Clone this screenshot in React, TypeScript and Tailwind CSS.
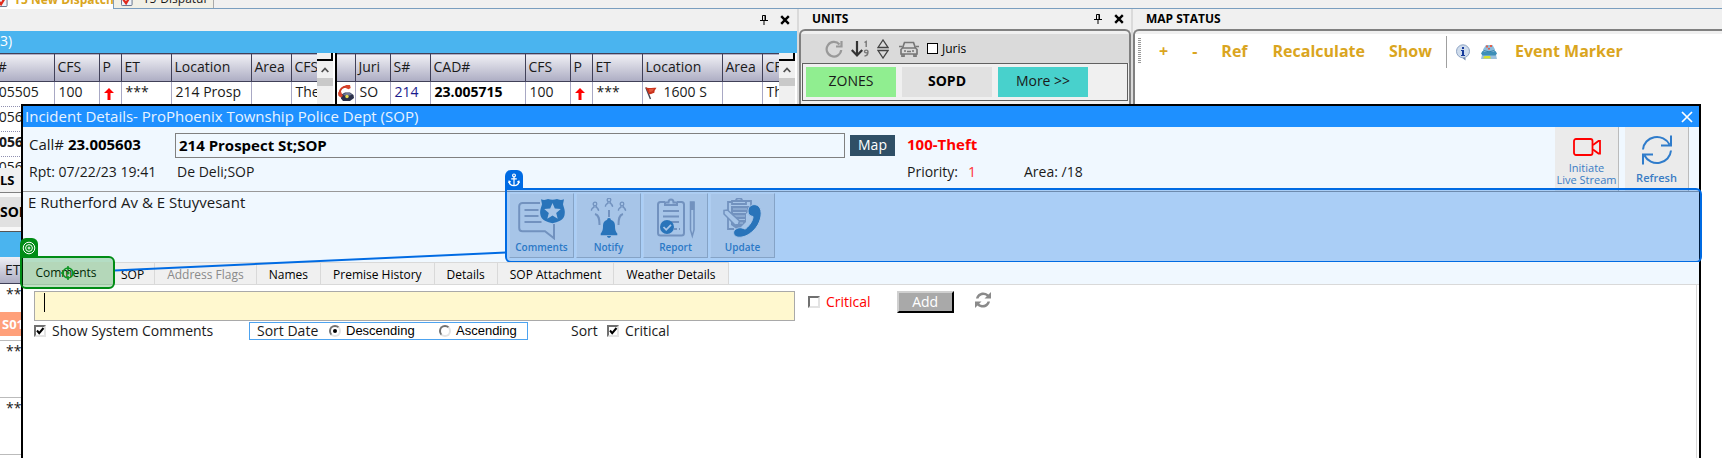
import React from "react";

const AnchorIcon = () => (
  <svg viewBox="0 0 12 14" className="h-3.5 w-3" fill="none" stroke="#fff" strokeWidth="1.2">
    <circle cx="6" cy="2.4" r="1.4" />
    <path d="M6 3.8V12.6M3.2 5.8h5.6M1 8.4c.3 2.600 2.200 4.200 5 4.200s4.700-1.600 5-4.200M.5 9.900l.6-1.700 1.600.9M11.500 9.900l-.6-1.700-1.600.9" />
  </svg>
);

const PinIcon = () => (
  <svg viewBox="0 0 8 10" className="h-2.5 w-2" fill="none" stroke="#000">
    <path d="M2.500 5.500v-5h3v5M0 5.500h8M4 6v4M5 .5v5" />
  </svg>
);

const XIcon = () => (
  <svg viewBox="0 0 10 10" className="h-2.5 w-2.5" stroke="#000" strokeWidth="2.4">
    <path d="M1.200 1.200l7.600 7.600M8.800 1.200L1.200 8.800" />
  </svg>
);

const TabCheckIcon = () => (
  <svg viewBox="0 0 13 14" className="h-3.5 w-3 shrink-0">
    <rect x=".5" y=".5" width="11.500" height="12.500" rx="1" fill="#eef3fa" stroke="#5d6b85" />
    <path d="M2.500 6.500l3 4L11 1.500" fill="none" stroke="#e02a1c" strokeWidth="2.400" />
  </svg>
);

const UpArrow = () => (
  <svg viewBox="0 0 10 12" className="mt-1 h-3 w-2.5" fill="#f00">
    <path d="M5 0l5 5H6.500v7h-3V5H0z" />
  </svg>
);

const PhoneIcon = () => (
  <svg viewBox="0 0 16 16" className="h-4 w-4">
    <path d="M3.500 9.500L7 7.500h5l3.500 2.500.5 3-4 3H5l-2-2.500z" fill="#2a2f4a" />
    <path d="M5 9l3-1h4l2 1.500-2 1H6z" fill="#6f7896" />
    <path d="M1.600 8C1.800 4.500 4.500 1.500 9 1.600" fill="none" stroke="#cf3a24" strokeWidth="2.200" />
    <path d="M7.500 0h4.500l.7 3-2.200 1.300L7.800 3z" fill="#d8452c" />
    <path d="M0 7.500l3-.7 2 4.200-2.500 1.500L.3 10.500z" fill="#d8452c" />
    <circle cx="9" cy="11.500" r="1.700" fill="#e8dc50" />
  </svg>
);

const FlagIcon = () => (
  <svg viewBox="0 0 12 13" className="mt-0.5 h-3.5 w-3">
    <path d="M.8 1l4.700 11.500" stroke="#445" strokeWidth="1.400" />
    <path d="M.5.8c3 1.500 6 0 11 .5L9.700 4l-.5 2.500C7.500 6 6 8.500 3.800 7.500z" fill="#c9331c" />
    <path d="M4 2.500l5-.3-1.500 2.500-3 1z" fill="#e2553a" />
  </svg>
);

type Col = { label: React.ReactNode; w: string };
const leftCols: Col[] = [
  { label: "CAD#", w: "w-[87px]" },
  { label: "CFS", w: "w-[45px]" },
  { label: "P", w: "w-[22px]" },
  { label: "ET", w: "w-[50px]" },
  { label: "Location", w: "w-[80px]" },
  { label: "Area", w: "w-[40px]" },
  { label: "CFS", w: "w-[27px]" },
];
const rightCols: Col[] = [
  { label: "", w: "w-[18px]" },
  { label: "Juri", w: "w-[35px]" },
  { label: "S#", w: "w-[40px]" },
  { label: "CAD#", w: "w-[95px]" },
  { label: "CFS", w: "w-[45px]" },
  { label: "P", w: "w-[22px]" },
  { label: "ET", w: "w-[50px]" },
  { label: "Location", w: "w-[80px]" },
  { label: "Area", w: "w-[40px]" },
  { label: "CFS", w: "w-[17px]" },
];

function Grid({ cols, rows, className }: { cols: Col[]; rows: React.ReactNode[][]; className?: string }) {
  return (
    <table className={`table-fixed border-collapse text-sm text-[#1a1a1a] ${className ?? ""}`}>
      <thead>
        <tr className="h-7 border-y border-[#404058] bg-linear-to-b from-[#efeff4] to-[#aeaec4]">
          {cols.map((c, i) => (
            <th key={i} className={`${c.w} overflow-hidden border-r border-[#404058] p-0 pb-0.5 pl-[3px] text-left font-normal whitespace-nowrap`}>
              {c.label}
            </th>
          ))}
        </tr>
      </thead>
      <tbody>
        {rows.map((r, i) => (
          <tr key={i} className="h-[25px] border-b border-dotted border-[#9090b0] bg-white">
            {r.map((c, j) => (
              <td key={j} className="overflow-hidden border-r border-solid border-r-[#a8a8c4] p-0 pb-1 pl-1 whitespace-nowrap">
                {c}
              </td>
            ))}
          </tr>
        ))}
      </tbody>
    </table>
  );
}

function ScrollBar() {
  return (
    <div className="flex w-4 shrink-0 flex-col bg-[#f0f0f0]">
      <div className="h-2 border-r-2 border-b-2 border-black bg-[#f0f0f0]" />
      <div className="flex h-[17px] items-center justify-center">
        <svg viewBox="0 0 8 6" className="h-1.5 w-2" fill="none" stroke="#505050" strokeWidth="1.800">
          <path d="M.7 5L4 1.500 7.300 5" />
        </svg>
      </div>
      <div className="h-2 bg-[#c9c9c9]" />
    </div>
  );
}

function Dispatch() {
  const stars = <span>***</span>;
  return (
    <section className="flex w-[797px] shrink-0 flex-col bg-white">
      <div className="flex h-[22px] items-center justify-end gap-3 bg-[#f0f0f0] pr-[7px]">
        <button aria-label="Pin calls"><PinIcon /></button>
        <button aria-label="Close calls"><XIcon /></button>
      </div>
      <h2 className="h-[22px] bg-[#4ab4ef] text-sm leading-5 text-white">3)</h2>
      <div className="flex h-[115px] overflow-hidden">
        <div className="flex w-[317px] items-start overflow-hidden">
          <Grid
            className="-ml-[33px] w-[351px] shrink-0"
            cols={leftCols}
            rows={[
              ["23.005505", "100", <UpArrow />, stars, "214 Prosp", "", "Theft"],
              ["23.005601", "", "", "", "", "", ""],
              [<b>23.005603</b>, "", "", "", "", "", ""],
              ["23.005604", "", "", "", "", "", ""],
            ]}
          />
        </div>
        <ScrollBar />
        <div className="ml-0.5 w-0.5 bg-black" />
        <div className="flex w-[442px] items-start overflow-hidden">
          <Grid
            className="w-[442px] shrink-0"
            cols={rightCols}
            rows={[
              [
                <span className="-ml-[3px] block pt-0.5"><PhoneIcon /></span>,
                "SO",
                <span className="text-[#1a1a8c]">214</span>,
                <b className="text-black">23.005715</b>,
                "100",
                <UpArrow />,
                stars,
                <span className="-ml-0.5 flex items-center gap-[7px]"><FlagIcon />1600 S</span>,
                "",
                "Theft",
              ],
            ]}
          />
        </div>
        <ScrollBar />
      </div>
      <h2 className="h-[25px] border-b border-[#808080] bg-[#f0f0f0] text-[13px] leading-6 font-bold text-black">
        LS
      </h2>
      <div className="flex h-[38px] items-center bg-[#f8f8f8]">
        <button className="h-[30px] w-[90px] bg-[#e1e1e1] text-left text-sm font-bold text-black">SOPD</button>
      </div>
      <div className="h-[26px] border-t border-[#555] bg-[#4ab4ef]" />
      <div className="h-[27px] border-b border-[#404058] bg-linear-to-b from-[#efeff4] to-[#aeaec4] pl-[5px] text-sm leading-[26px]">ET</div>
      <div className="h-[57px] border-b border-[#bbb] pl-1.5 text-sm leading-5">
        ***
        <div className="mt-2 -ml-1.5 h-6 bg-[#ffa07a] pl-0.5 text-[13px] leading-6 font-bold text-white">S01</div>
      </div>
      <div className="h-[57px] border-b border-[#bbb] pl-1.5 text-sm leading-5">***</div>
      <div className="h-[57px] border-b border-[#bbb] pl-1.5 text-sm leading-5">***</div>
    </section>
  );
}

function Units() {
  return (
    <section className="flex w-[334px] shrink-0 flex-col border-l-2 border-[#dadada] bg-[#f0f0f0]">
      <div className="flex h-5 items-center gap-3 pr-[7px] pl-[13px]">
        <h2 className="flex-1 text-xs font-bold text-black">UNITS</h2>
        <button aria-label="Pin units"><PinIcon /></button>
        <button aria-label="Close units"><XIcon /></button>
      </div>
      <div className="flex flex-1 flex-col rounded-t-md border-2 border-b-0 border-[#808080] pt-[3px]">
        <div className="flex h-[29px] items-center gap-2 bg-[#dadada] pl-6">
          <button aria-label="Refresh units">
            <svg viewBox="0 0 18 18" className="h-[18px] w-[18px]" fill="none" stroke="#999" strokeWidth="2.200">
              <path d="M14.500 4.500A7.300 7.300 0 1 0 16.200 10M16.500 1v5.500H11" />
            </svg>
          </button>
          <button aria-label="Sort units">
            <svg viewBox="0 0 18 18" className="h-[18px] w-[18px]" fill="none" stroke="#333" strokeWidth="2.200">
              <path d="M6 1v14M.8 10L6 15.500 11.200 10" />
              <path d="M13.500 2.500l1.700-1v5.500M17 11.500c0 1.800-3.500 1.800-3.500 0s3.500-1.800 3.500 0c0 3-.5 4.500-3.500 4.500" stroke="#777" strokeWidth="1.400" />
            </svg>
          </button>
          <button aria-label="Expand units">
            <svg viewBox="0 0 12 20" className="h-5 w-3" fill="none" stroke="#444" strokeWidth="1.300">
              <path d="M1 8.500L6 1l5 7.500zM1 11.500L6 19l5-7.500z" />
            </svg>
          </button>
          <button aria-label="Vehicles" className="ml-0.5">
            <svg viewBox="0 0 20 16" className="h-4 w-5" fill="none" stroke="#777" strokeWidth="1.700">
              <path d="M3.500 7L5.500 1.500h9L16.500 7M2 13V8.500L3.500 7h13L18 8.500V13zM0 5.500h3M17 5.500h3M3 13v2.500h2V13M15 13v2.500h2V13M5 10h2M13 10h2M8 10.500h4" />
            </svg>
          </button>
          <label className="flex items-center gap-1 text-xs text-black">
            <input type="checkbox" className="h-[11px] w-[11px] appearance-none border border-black bg-white checked:bg-black" />
            Juris
          </label>
        </div>
        <div className="mx-px flex h-[38px] items-center gap-1.5 border border-[#606060] px-[3px] text-sm">
          <button className="h-[30px] w-[90px] bg-[#90ee90] pb-0.5">ZONES</button>
          <button className="h-[30px] w-[90px] bg-[#e1e1e1] pb-0.5 font-bold text-black">SOPD</button>
          <button className="h-[30px] w-[90px] bg-[#48d1cc] pb-0.5">More &gt;&gt;</button>
        </div>
      </div>
    </section>
  );
}

function MapStatus() {
  return (
    <section className="flex min-w-0 flex-1 flex-col border-l-2 border-[#dadada] bg-[#f0f0f0]">
      <h2 className="h-5 pl-[13px] text-xs leading-[19px] font-bold text-black">MAP STATUS</h2>
      <div className="flex-1 rounded-tl-md border-t-2 border-l-2 border-[#808080] pt-[3px]">
        <div className="flex h-full items-start bg-white pt-px pl-[3px] text-base font-bold text-[#daa520]">
          <div className="mt-[3px] h-[25px] w-[3px] bg-[repeating-linear-gradient(to_bottom,#999_0_1px,#fff_1px_2px)]" />
          <div className="flex h-[34px] items-center whitespace-nowrap">
            <button className="ml-[18px] pb-0.5">+</button>
            <button className="ml-6 pb-0.5">-</button>
            <button className="ml-6 pb-0.5">Ref</button>
            <button className="ml-[25px] pb-0.5">Recalculate</button>
            <button className="ml-6 pb-0.5">Show</button>
            <div className="ml-3.5 h-8 w-px bg-[#a0a0a0]" />
            <button aria-label="Map information" className="ml-2">
              <svg viewBox="0 0 16 17" className="h-[17px] w-4">
                <circle cx="8" cy="7.300" r="6.500" fill="#cfdcec" stroke="#8ea4c4" />
                <path d="M7.500 14h3v2.500z" fill="#6d86ac" />
                <path d="M7 3h2v2H7zM6 6h3v5h1v1H6v-1h1V7H6z" fill="#163a9c" />
              </svg>
            </button>
            <button aria-label="Map layers" className="ml-2.5">
              <svg viewBox="0 0 16 16" className="h-4 w-4">
                <path d="M1 10.500h14l1 4.500H0z" fill="#9cc0dc" />
                <path d="M3.500 12h5.500l1 2.500H2z" fill="#d8e02c" />
                <path d="M1.500 7h13l1.500 2.500-1.500 2h-13L0 9.500z" fill="#3d8fb8" />
                <path d="M5 1h6.500L14 5.500 13 8H3L2 5.500z" fill="#8cbcdc" />
                <path d="M2.500 6.500l5.500 1.300 5.500-1.300" fill="none" stroke="#2f7fa8" />
                <path d="M5 1.500h2v2H5zM9 1h2v2H9zM7 4h2v1.500H7z" fill="#e0604c" />
              </svg>
            </button>
            <button className="ml-[18px] pb-0.5">Event Marker</button>
          </div>
        </div>
      </div>
    </section>
  );
}

function Check({ id, label, checked, className }: { id: string; label: string; checked?: boolean; className?: string }) {
  return (
    <label htmlFor={id} className={`flex items-center gap-1.5 ${className ?? ""}`}>
      <span className="relative h-3 w-3">
        <input
          id={id}
          type="checkbox"
          defaultChecked={checked}
          className="peer block h-3 w-3 appearance-none border-2 border-t-[#707070] border-r-[#e3e3e3] border-b-[#e3e3e3] border-l-[#707070] bg-white"
        />
        <svg viewBox="0 0 12 12" className="pointer-events-none absolute inset-0 hidden h-3 w-3 peer-checked:block" fill="none" stroke="#000" strokeWidth="2">
          <path d="M3 5.500l2.200 2.700L9.500 3" />
        </svg>
      </span>
      {label}
    </label>
  );
}

function Radio({ label, checked }: { label: string; checked?: boolean }) {
  return (
    <label className="flex items-center gap-[5px] font-['Liberation_Sans',sans-serif] text-[13px] text-black">
      <span className="relative h-3 w-3">
        <input
          type="radio"
          name="sortDate"
          defaultChecked={checked}
          className="peer block h-3 w-3 appearance-none rounded-full border-2 border-t-[#707070] border-r-[#e3e3e3] border-b-[#e3e3e3] border-l-[#707070]"
        />
        <span className="pointer-events-none absolute top-1 left-1 hidden h-1 w-1 rounded-full bg-black peer-checked:block" />
      </span>
      {label}
    </label>
  );
}

const person = (x: number, y: number) => (
  <g transform={`translate(${x} ${y})`} fill="none" stroke="#a0a4b2" strokeWidth="1.300">
    <circle cx="4" cy="2" r="1.800" />
    <path d="M.4 8.800c0-2 .9-3 2.500-3.400V4M5.100 4v1.400C6.700 5.800 7.600 6.800 7.600 8.800z" />
  </g>
);

const tools = [
  {
    label: "Comments",
    icon: (
      <>
        <path d="M22 5H4.500C2.500 5 1.200 6.300 1.200 8.300V30c0 2 1.300 3.300 3.300 3.300h22.500l9 7V26M6.500 12h14M6.500 18h14M6.500 24h17" fill="none" stroke="#a0a4b2" strokeWidth="2" />
        <path d="M25 1.200c3 1.400 5.500.4 7-.2 3 1 6 1 9 0 1.500.6 4 1.600 7 .2l-1 5c1 4 2.500 6 1.500 11-1 5-7 7-12 8-5-1-11-3-12-8-1-5 .5-7 1.500-11z" transform="translate(-2)" fill="#3a79aa" />
        <path d="M34.500 5l2.300 5.600 6 .4-4.600 3.900 1.500 5.800-5.200-3.200-5.200 3.200 1.500-5.800-4.600-3.900 6-.4z" fill="#ebebeb" />
      </>
    ),
  },
  {
    label: "Notify",
    icon: (
      <>
        {person(6, 4)}
        {person(20, 0)}
        {person(33, 4)}
        <path d="M10 16c4 1 4.500 5 4.500 11M38 16c-4 1-4.500 5-4.500 11M24 12v7" fill="none" stroke="#a0a4b2" strokeWidth="2" />
        <path d="M24 20c1.500 0 1.800 1 1.800 1.800 3 1 4.200 3 4.200 6 0 5 1 6 2.300 7.800v1.600H15.700v-1.600C17 33.800 18 32.800 18 27.800c0-3 1.200-5 4.200-6C22.200 21 22.500 20 24 20zM22 38h4c0 2.400-4 2.400-4 0z" fill="#3a79aa" />
      </>
    ),
  },
  {
    label: "Report",
    icon: (
      <>
        <path d="M13 4H8.500C7 4 6 5 6 6.500V35c0 1.500 1 2.500 2.500 2.500h21c1.500 0 2.500-1 2.500-2.500V6.500C32 5 31 4 29.500 4H25M13 7h12V4.500h-3.500c0-4-5-4-5 0H13zM11 13h16M11 18.500h16M19 24h8M22 31h3M27 31h1" fill="none" stroke="#a0a4b2" strokeWidth="2" />
        <circle cx="15" cy="29" r="7" fill="#3a79aa" />
        <path d="M11.500 29l2.700 2.800 4.800-5" fill="none" stroke="#ebebeb" strokeWidth="1.800" />
        <path d="M38.500 4h3.500v28l-1.700 6-1.800-6z" fill="none" stroke="#a0a4b2" strokeWidth="1.500" />
        <path d="M38 4h4.500v8H38z" fill="#a0a4b2" />
      </>
    ),
  },
  {
    label: "Update",
    icon: (
      <>
        <path d="M13 4H9v27h6M25 3h7v5M13 3h14v3H13zM17 2.500c0-3 6-3 6 0" fill="none" stroke="#a0a4b2" strokeWidth="1.800" />
        <path d="M12 8h19v4l-4 4v8l-8 8-7-5z" fill="#a0a4b2" />
        <path d="M14 11h14M14 14.500h13M14 18h12M14 21.500h12M16 25h8" stroke="#e3e3e3" strokeWidth="1" />
        <path d="M5 12.500l3.500-.5 12 11-1 3.500-3.500.5-11-11z" fill="#ebebeb" stroke="#a0a4b2" strokeWidth="1.500" />
        <path d="M33 7c3-1 6 0 8 3 3 6 0 16-6 22-6 6-12 8-17 7-3-1-4-4-3-6 1-2 5-4 8-3 2 .7 3 1.500 4 .500 4-3.500 7-8 7-12-3-.5-5-2-5-5.500 0-3 1.500-5 4-6z" fill="#3a79aa" stroke="#ebebeb" strokeWidth="1" />
      </>
    ),
  },
];

const tabs = ["SOP", "Address Flags", "Names", "Premise History", "Details", "SOP Attachment", "Weather Details"];

function IncidentWindow() {
  return (
    <div
      role="dialog"
      aria-label="Incident Details"
      className="absolute top-[104px] right-[21px] bottom-0 left-[21px] flex flex-col border-2 border-b-0 border-black bg-white text-[#1a1a1a]"
    >
      <header className="flex h-[21px] shrink-0 items-center justify-between bg-[#1e90ff] pr-1.5 pl-0.5 text-[15px] text-[#e8f3ff]">
        <h1 className="pb-px">Incident Details- ProPhoenix Township Police Dept (SOP)</h1>
        <button aria-label="Close">
          <svg viewBox="0 0 12 12" className="h-3 w-3" stroke="#fff" strokeWidth="1.700">
            <path d="M1 1l10 10M11 1L1 11" />
          </svg>
        </button>
      </header>

      <div className="flex h-16 shrink-0 justify-between bg-[#f0f8ff] pr-2.5 pl-1.5 text-sm">
        <div className="pt-1.5">
          <div className="flex h-[25px] items-center">
            <label htmlFor="address" className="w-[146px] pb-0.5 text-[15px]">
              Call# <b className="text-black">23.005603</b>
            </label>
            <input
              id="address"
              defaultValue="214 Prospect St;SOP"
              className="h-[25px] w-[670px] border border-[#808080] bg-transparent px-[3px] pb-0.5 text-[15px] font-bold text-black outline-none"
            />
            <button className="ml-[5px] h-[21px] w-[45px] bg-[#2f4f66] pb-0.5 text-sm leading-4 text-white">Map</button>
            <span className="ml-3 pb-0.5 text-[15px] font-bold text-[#f00]">100-Theft</span>
          </div>
          <div className="mt-0.5 flex h-6 items-center">
            <span className="w-[148px]">Rpt: 07/22/23 19:41</span>
            <span className="w-[730px]">De Deli;SOP</span>
            <span className="w-[61px]">Priority:</span>
            <span className="w-14 text-[#ff3333]">1</span>
            <span>Area: /18</span>
          </div>
        </div>
        <div className="flex gap-1.5">
          <button className="flex w-16 flex-col items-center border-r border-[#bbb] bg-[#ebebeb] pt-[11px] text-[11px] leading-3 text-[#3a7cc4]">
            <svg viewBox="0 0 28 18" className="h-[18px] w-7" fill="none" stroke="#f00" strokeWidth="1.800">
              <rect x="1" y="1" width="18.500" height="16" rx="2" />
              <path d="M20 7l5.500-4H27v12.500h-1.500L20 11.500" />
            </svg>
            <span className="mt-1.5 whitespace-nowrap">
              Initiate
              <br />
              Live Stream
            </span>
          </button>
          <button className="flex w-16 flex-col items-center border-r border-[#bbb] bg-[#ebebeb] pt-2 text-[11px] leading-3 font-semibold text-[#3a7cc4]">
            <svg viewBox="0 0 30 30" className="h-[30px] w-[30px]" fill="none" stroke="#2f7ccb" strokeWidth="2">
              <path d="M1 14.500A14 13.500 0 0 1 27.500 9.500M29 .5v10H19M29 15.500A14 13.500 0 0 1 2.500 20.500M1 29.500v-10h10" />
            </svg>
            <span className="mt-[7px]">Refresh</span>
          </button>
        </div>
      </div>

      <div className="relative flex h-[71px] shrink-0 border-t border-[#999] bg-[#f0f8ff]">
        <p className="w-[486px] pl-[5px] text-[15px] leading-5">E Rutherford Av &amp; E Stuyvesant</p>
        <div className="flex gap-0.5 pt-px">
          {tools.map((t) => (
            <button
              key={t.label}
              className="flex h-[65px] w-[65px] flex-col items-center border border-t-[#f7f7f7] border-r-[#bbb] border-b-[#bbb] border-l-[#f7f7f7] bg-[#ebebeb] pt-1 text-[10px] leading-3 font-semibold text-[#3c80bb]"
            >
              <svg viewBox="0 0 48 42" className="h-[42px] w-12 shrink-0">
                {t.icon}
              </svg>
              <span className="mt-px">{t.label}</span>
            </button>
          ))}
        </div>
        <div className="pointer-events-none absolute -top-1 -right-[3px] left-[482px] h-[75px] rounded-md rounded-tl-none border-2 border-[#006be3] bg-[#0069e0]/29" />
        <div className="pointer-events-none absolute -top-[22px] left-[482px] flex h-5 w-[18px] items-center justify-center rounded-t-md bg-[#006be3]">
          <AnchorIcon />
        </div>
      </div>

      <nav className="relative flex h-[23px] shrink-0 border-b border-[#d9d9d9] bg-[#f0f8ff] text-xs font-medium text-black">
        <button className="w-[91px] border-r border-[#d9d9d9] bg-[#f0f0f0] pr-1">Comments</button>
        {tabs.map((t) => (
          <button
            key={t}
            className={`border-t border-r border-[#d9d9d9] bg-[#f0f0f0] pt-0.5 whitespace-nowrap ${t === "SOP" ? "pr-2.5 pl-[7px]" : "px-3"} ${t === "Address Flags" ? "text-[#8a8a8a]" : ""}`}
          >
            {t}
          </button>
        ))}
        <svg className="pointer-events-none absolute -top-3 left-[91px] h-6 w-[392px]" viewBox="0 0 392 24" preserveAspectRatio="none">
          <path d="M0 20.500L392 2.500" stroke="#006be3" strokeWidth="2" />
        </svg>
        <div className="pointer-events-none absolute -top-1.5 -left-[3px] flex h-[33px] w-[95px] items-center justify-center rounded-md rounded-tl-none border-2 border-[#008c15] bg-[#008c15]/25">
          <svg viewBox="0 0 14 14" className="h-3.5 w-3.5" fill="none" stroke="#0a9520" strokeWidth="1.500">
            <circle cx="7" cy="7" r="5" />
            <path d="M7 0v4M7 10v4M0 7h3M11 7h3M7 5.500v3M5.500 7h3" />
          </svg>
        </div>
        <div className="pointer-events-none absolute -top-[24px] -left-[3px] flex h-5 w-[18px] items-center justify-center rounded-t-md bg-[#008c15]">
          <svg viewBox="0 0 14 14" className="h-3.5 w-3.5" fill="none" stroke="#fff">
            <circle cx="7" cy="7" r="5.800" />
            <circle cx="7" cy="7" r="3.400" />
            <circle cx="7" cy="7" r="1" />
          </svg>
        </div>
      </nav>

      <div className="mr-0.5 flex-1 border-r border-[#d9d9d9] pt-1.5 pl-[11px] text-sm">
        <div className="flex items-start">
          <div className="relative flex">
            <textarea
              aria-label="New comment"
              className="h-[30px] w-[761px] resize-none overflow-hidden border border-[#a9a9a9] bg-[#fff8cf] px-2 py-1 leading-5 text-black outline-none"
            />
            <span className="pointer-events-none absolute top-0.5 left-2.5 h-[19px] w-px bg-black" />
          </div>
          <Check id="critical" label="Critical" className="mt-px ml-[13px] text-[#f00]" />
          <button className="ml-[26px] h-[22px] w-[57px] border-2 border-t-[#d0d0d0] border-r-black border-b-black border-l-[#d0d0d0] bg-[#a9a9a9] leading-4 text-white">
            Add
          </button>
          <button aria-label="Reload comments" className="mt-px ml-[21px]">
            <svg viewBox="0 0 16 16" className="h-4 w-4" fill="#8a8a8a">
              <path d="M1 6.500C2 .5 9-1.500 13.500 2.500L16 0v6.500H9.500l2.300-2.300C9 2 4.500 3 3.500 6.500zM15 9.500C14 15.500 7 17.500 2.500 13.500L0 16V9.500h6.500l-2.300 2.300C7 14 11.500 13 12.500 9.500z" />
            </svg>
          </button>
        </div>
        <div className="mt-px flex h-[18px] items-center">
          <Check id="system" label="Show System Comments" checked className="w-[215px]" />
          <fieldset className="flex h-[18px] w-[279px] items-center border border-[#4da3f0] pl-[7px]">
            <span className="w-[72px] leading-4">Sort Date</span>
            <span className="w-[110px]"><Radio label="Descending" checked /></span>
            <Radio label="Ascending" />
          </fieldset>
          <span className="ml-[43px] w-9">Sort</span>
          <Check id="sortCritical" label="Critical" checked />
        </div>
      </div>
    </div>
  );
}

export default function App() {
  return (
    <div className="relative flex h-screen flex-col overflow-hidden bg-[#f0f0f0] font-['Open_Sans','Noto_Sans',sans-serif] text-[#1a1a1a]">
      <nav className="flex h-[9px] shrink-0 items-end border-b border-[#7a9ebf] text-xs leading-4 whitespace-nowrap">
        <button className="-mb-px flex h-5 w-[114px] shrink-0 items-end gap-1.5 overflow-hidden border-r border-[#7a9ebf] bg-white pb-px font-bold text-[#daa520]">
          <span className="-ml-1"><TabCheckIcon /></span>
          T5 New Dispatch
        </button>
        <button className="flex h-5 w-[100px] shrink-0 items-end gap-2.5 border-r border-[#aaa] bg-[#f1f0e6] pb-px pl-[7px]">
          <TabCheckIcon />
          T5-Dispatur
        </button>
      </nav>
      <main className="flex min-h-0 flex-1">
        <Dispatch />
        <Units />
        <MapStatus />
      </main>
      <IncidentWindow />
    </div>
  );
}
